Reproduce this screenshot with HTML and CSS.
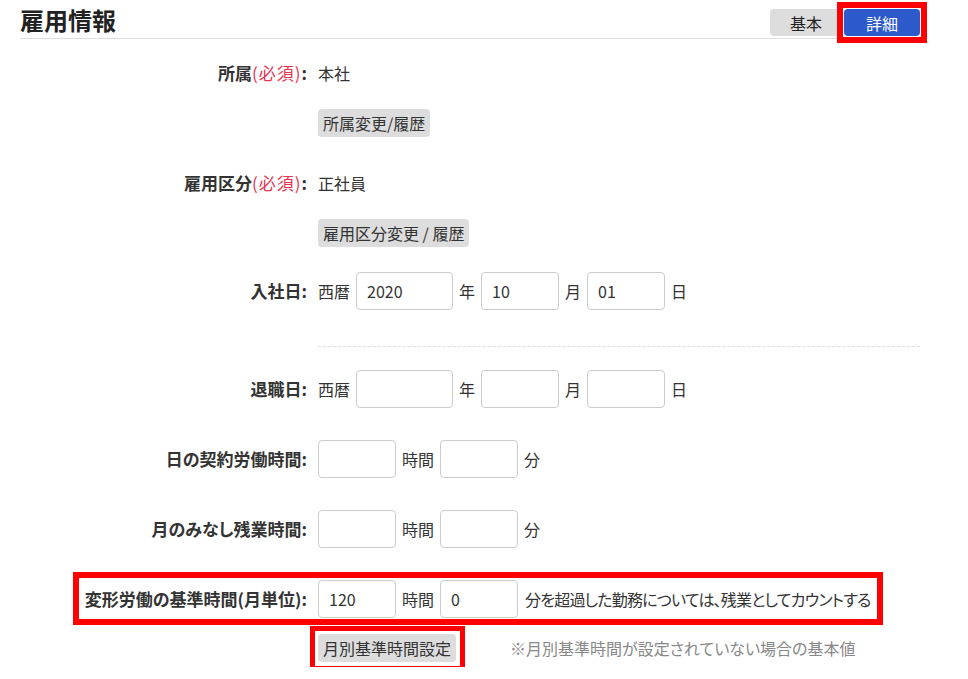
FILE: index.html
```html
<!DOCTYPE html>
<html>
<head>
  <meta charset="utf-8" />
  <meta name="viewport" content="width=device-width, initial-scale=1" />
  <title>雇用情報</title>
  <link rel="stylesheet" href="styles.css">
</head>
<body>
  <div id="employment">
    <div class="section-head">
      <h2>雇用情報</h2>
      <div class="mode-toggle">
        <button class="mode">基本</button>
        <button class="mode active marked">詳細</button>
      </div>
    </div>

    <div class="form">
      <div class="row">
        <div class="label">所属<span class="req">(必須)</span>:</div>
        <div class="value">本社</div>
      </div>
      <div class="row sub">
        <div class="label"></div>
        <div class="value"><button class="btn-gray">所属変更/履歴</button></div>
      </div>

      <div class="row group">
        <div class="label">雇用区分<span class="req">(必須)</span>:</div>
        <div class="value">正社員</div>
      </div>
      <div class="row sub">
        <div class="label"></div>
        <div class="value"><button class="btn-gray">雇用区分変更 / 履歴</button></div>
      </div>

      <div class="row date-first">
        <div class="label">入社日:</div>
        <div class="value">
          西暦 <input class="inp year" type="text" value="2020"> 年
          <input class="inp" type="text" value="10"> 月
          <input class="inp" type="text" value="01"> 日
        </div>
      </div>

      <div class="divider"></div>

      <div class="row after-divider">
        <div class="label">退職日:</div>
        <div class="value">
          西暦 <input class="inp year" type="text"> 年
          <input class="inp" type="text"> 月
          <input class="inp" type="text"> 日
        </div>
      </div>

      <div class="row spaced">
        <div class="label">日の契約労働時間:</div>
        <div class="value">
          <input class="inp" type="text"> 時間
          <input class="inp" type="text"> 分
        </div>
      </div>

      <div class="row spaced">
        <div class="label">月のみなし残業時間:</div>
        <div class="value">
          <input class="inp" type="text"> 時間
          <input class="inp" type="text"> 分
        </div>
      </div>

      <div class="row spaced marked-row">
        <div class="label">変形労働の基準時間(月単位):</div>
        <div class="value">
          <input class="inp" type="text" value="120"> 時間
          <input class="inp" type="text" value="0">
          <span class="long">分を超過した勤務については、残業としてカウントする</span>
        </div>
      </div>
      <div class="row sub tight">
        <div class="label"></div>
        <div class="value">
          <button class="btn-gray marked">月別基準時間設定</button>
          <span class="note">※月別基準時間が設定されていない場合の基本値</span>
        </div>
      </div>
    </div>
  </div>
</body>
</html>
```

FILE: styles.css
```css
* {
  margin: 0;
  padding: 0;
  box-sizing: border-box;
}

body {
  background-color: #fff;
  color: #333;
  font-family: "Noto Sans CJK JP", "Noto Sans", sans-serif;
  font-size: 16px;
  line-height: 1.4;
}

#employment {
  width: 900px;
  margin-left: 20px;
}

.section-head {
  display: flex;
  justify-content: space-between;
  height: 39px;
  border-bottom: 1px solid #ddd;
}

.section-head h2 {
  font-size: 24px;
  font-weight: bold;
  line-height: 38px;
  margin-top: 1px;
  color: #222;
}

.mode-toggle {
  display: flex;
  gap: 2px;
  margin-top: 9px;
}

.mode {
  width: 72px;
  height: 27px;
  border: none;
  border-radius: 4px;
  background-color: #ddd;
  color: #222;
  font-family: inherit;
  font-size: 16px;
}

.mode.active {
  width: 76px;
  background-color: #2c5acb;
  color: #fff;
}

/* red annotation frames (square, so not outline) */
.marked {
  position: relative;
}

.marked::after {
  content: "";
  position: absolute;
  left: -7px;
  right: -7px;
  top: -7px;
  bottom: -7px;
  border: 6px solid #f00;
}

.btn-gray.marked::after {
  left: -8px;
  right: -9px;
  top: -8px;
  bottom: -9px;
  border-width: 5px;
}

.form {
  padding-top: 15px;
}

.row {
  display: flex;
  align-items: center;
  min-height: 38px;
}

.label {
  flex: none;
  width: 287px;
  margin-right: 11px;
  text-align: right;
  font-size: 17px;
  font-weight: bold;
  color: #333;
  font-feature-settings: "palt";
}

.req {
  color: #e8334f;
  font-weight: normal;
  letter-spacing: 1px;
}

.value {
  display: flex;
  align-items: center;
  gap: 6px;
  white-space: nowrap;
}

.row.sub {
  margin-top: 12px;
}

.row.group {
  margin-top: 22px;
}

.row.date-first {
  margin-top: 20px;
}

.row.spaced {
  margin-top: 32px;
}

.row.after-divider {
  margin-top: 23px;
}

.row.sub.tight {
  margin-top: 11px;
}

.divider {
  margin-top: 36px;
  margin-left: 298px;
  border-top: 1px dashed #ddd;
}

.btn-gray {
  height: 28px;
  padding: 0 5px;
  border: none;
  border-radius: 4px;
  background-color: #ddd;
  color: #333;
  font-family: inherit;
  font-size: 16px;
}

.inp {
  width: 78px;
  height: 38px;
  padding: 0 10px;
  border: 1px solid #ccc;
  border-radius: 4px;
  font-family: inherit;
  font-size: 16px;
  color: #333;
  background-color: #fff;
}

.inp.year {
  width: 97px;
}

.long {
  margin-left: 1px;
  letter-spacing: -0.8px;
  font-feature-settings: "palt";
}

.note {
  margin-left: 48px;
  color: #888;
  font-feature-settings: "palt";
}

.marked-row {
  position: relative;
}

.marked-row::after {
  content: "";
  position: absolute;
  left: 53px;
  right: 37px;
  top: -8px;
  bottom: -7px;
  border: 6px solid #f00;
}
```
